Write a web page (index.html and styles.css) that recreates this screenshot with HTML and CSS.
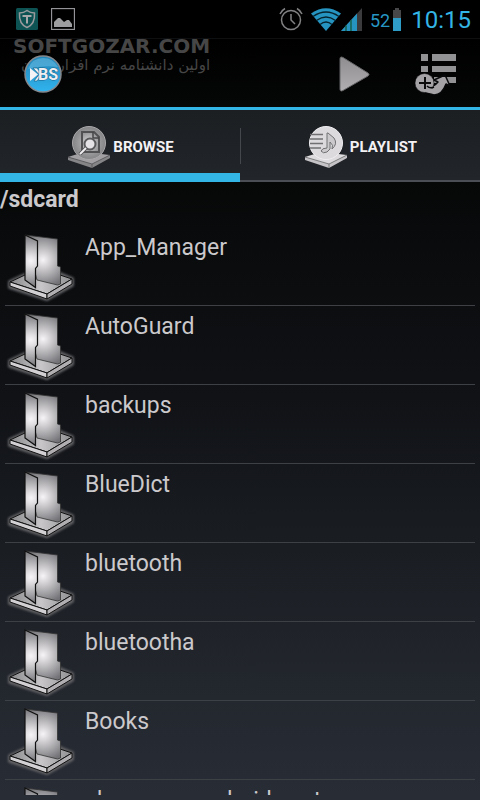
FILE: index.html
```html
<!DOCTYPE html>
<html lang="en">
<head>
    <meta charset="UTF-8">
    <meta name="viewport" content="width=device-width, initial-scale=1">
    <title>BSPlayer</title>
    <link rel="stylesheet" href="styles.css">
</head>
<body>
    <!-- shared shapes -->
    <svg class="defs" width="0" height="0" aria-hidden="true">
        <defs>
            <radialGradient id="front" gradientUnits="userSpaceOnUse" cx="31" cy="36" r="27">
                <stop offset="0" stop-color="#f6f4f6"/>
                <stop offset="0.2" stop-color="#e2e0e3"/>
                <stop offset="1" stop-color="#727276"/>
            </radialGradient>
            <radialGradient id="back" gradientUnits="userSpaceOnUse" cx="43" cy="35" r="27">
                <stop offset="0" stop-color="#f6f4f6"/>
                <stop offset="0.3" stop-color="#d0ced1"/>
                <stop offset="1" stop-color="#737377"/>
            </radialGradient>
            <linearGradient id="plate" x1="0" y1="0" x2="1" y2="0">
                <stop offset="0" stop-color="#88888b"/>
                <stop offset="0.5" stop-color="#c8c6c9"/>
                <stop offset="1" stop-color="#8f8f92"/>
            </linearGradient>
            <radialGradient id="disc">
                <stop offset="0" stop-color="#dddbdd"/>
                <stop offset="0.6" stop-color="#9c9c9e"/>
                <stop offset="1" stop-color="#858587"/>
            </radialGradient>
            <linearGradient id="metal" x1="0" y1="0" x2="0" y2="1">
                <stop offset="0" stop-color="#8f8d90"/>
                <stop offset="1" stop-color="#b0aeb0"/>
            </linearGradient>
            <filter id="glow" x="-20%" y="-40%" width="140%" height="180%">
                <feGaussianBlur stdDeviation="1.3"/>
            </filter>
            <symbol id="folder" viewBox="0 2 80 79">
                <path d="M10 57L25 50L60 49L72 54V60L47 74L10 62Z" fill="#555558" stroke="#606064" stroke-width="4" stroke-linejoin="round" filter="url(#glow)"/>
                <path d="M10 57L25 50L60 50L72 54L47 69Z" fill="url(#plate)" stroke="#111"/>
                <path d="M10 57V61L47 74V69Z" fill="#d2d0d3" stroke="#111"/>
                <path d="M47 69V74L72 59V54Z" fill="#b0aeb1" stroke="#111"/>
                <path d="M25 10L57.500 14V41L60.500 42V59L57.500 60L37 55Z" fill="url(#back)" stroke="#333" stroke-width="0.800"/>
                <path d="M25 10L37.500 16V41L35.500 43.500V62.500L25 55Z" fill="url(#front)" stroke="#111" stroke-width="1.200"/>
            </symbol>
        </defs>
    </svg>

    <div class="status">
        <div class="notifications">
            <svg width="22" height="22" viewBox="0 0 22 22">
                <rect width="22" height="22" rx="1.500" fill="#0d5354"/>
                <path d="M11 2.500C8.500 4.500 6 5 3.500 5C3 12 5 17 11 19.500C17 17 19 12 18.500 5C16 5 13.500 4.500 11 2.500Z" fill="none" stroke="#9a9a9c" stroke-width="1.500"/>
                <path d="M6.500 8H15.500M11 8V15.500" stroke="#a8a8aa" stroke-width="2" fill="none"/>
            </svg>
            <svg width="24" height="22" viewBox="0 0 24 22">
                <rect x="0.500" y="0.500" width="23" height="21" fill="none" stroke="#949397" stroke-width="1.300"/>
                <path d="M3 19V14L5 12L7 10L9 10L13 14L16 12H18L21 16V19Z" fill="#9e9da0"/>
            </svg>
        </div>
        <div class="system">
            <svg class="alarm" width="24" height="24" viewBox="0 0 24 24" fill="none" stroke="#828285" stroke-width="1.500">
                <circle cx="12" cy="13" r="9.500"/>
                <path d="M12 7V13L16 17M1 7Q2.500 3.500 6 1.500M18 1.500Q21.500 3.500 23 7"/>
            </svg>
            <svg class="wifi" width="30" height="23" viewBox="0 0 30 23">
                <path d="M0 5.500Q15 -5 30 5.500L15 23Z" fill="#2694c0"/>
                <path d="M2 8.500Q15 -0.500 28 8.500M5.500 12.500Q15 5.500 24.500 12.500M9 16.500Q15 11.500 21 16.500" fill="none" stroke="#06222d" stroke-width="1.300"/>
            </svg>
            <svg class="signal" width="21" height="23" viewBox="0 0 21 23">
                <path d="M0 23L21 0V23Z" fill="#3b3b3e"/>
                <path d="M0 23L16 5.500V23Z" fill="#2694c0"/>
                <path d="M5 17.500V23M10 12V23" stroke="#14604f" stroke-width="1.500"/>
            </svg>
            <span class="charge">52</span>
            <svg class="battery" width="8" height="23" viewBox="0 0 8 23">
                <path d="M2 0H6V2H8V23H0V2H2Z" fill="#47474a"/>
                <path d="M0 10H8V23H0Z" fill="#2f9cc8"/>
            </svg>
            <span class="clock">10:15</span>
        </div>
    </div>

    <header>
        <div class="watermark">
            <div class="site">SOFTGOZAR.COM</div>
            <div class="slogan" lang="fa" dir="rtl">اولین دانشنامه نرم افزار ایران</div>
        </div>
        <svg class="logo" width="38" height="38" viewBox="0 0 38 38" role="img" aria-label="BS">
            <defs>
                <linearGradient id="ball" x1="0" y1="0" x2="0" y2="1">
                    <stop offset="0" stop-color="#2084b5"/>
                    <stop offset="0.5" stop-color="#2a9bd2"/>
                    <stop offset="1" stop-color="#31b5ef"/>
                </linearGradient>
            </defs>
            <circle cx="19" cy="19" r="18" fill="url(#ball)" stroke="#85898e" stroke-width="1.500"/>
            <path d="M4 14Q8 3 19 3Q29 3 34 12Q18 10 4 14Z" fill="#65b8df" opacity="0.6"/>
            <path d="M6 13L14 19.500L6 26Z" fill="#f4f4f6"/>
            <path d="M9 13H13L18 19.500L13 26H10L15 19.500Z" fill="#e8eef2" stroke="#17658c" stroke-width="0.700"/>
            <text x="14" y="25">BS</text>
        </svg>
        <div class="actions">
            <button type="button" aria-label="Play">
                <svg width="34" height="38" viewBox="0 0 34 38">
                    <path d="M3 4V34Q3 37 6 35.500L31 21Q33 19.500 31 18L6 2.500Q3 1 3 4Z" fill="url(#metal)" stroke="#656568"/>
                </svg>
            </button>
            <button type="button" aria-label="Add to playlist">
                <svg width="44" height="44" viewBox="0 0 44 44">
                    <path d="M7 2H14V9H7ZM18 2H42V9H18ZM7 14H14V20H7ZM18 14H42V20H18ZM20 25H42V31H20Z" fill="#929194"/>
                    <path d="M12 33Q18 37 24 30L20 28L31 23L36 34L32 32Q28 43 20 43Q14 42 11 38Z" fill="#a5a3a6" stroke="#08090a" stroke-width="1.500" stroke-linejoin="round"/>
                    <circle cx="10.500" cy="31" r="9.500" fill="#a5a3a6" stroke="#08090a" stroke-width="0.500"/>
                    <path d="M11 25V37M5 31H17" stroke="#0b0b0c" stroke-width="2"/>
                    <path d="M12 38Q18 41 24 36" fill="none" stroke="#a5a3a6" stroke-width="4"/>
                    <path d="M13 34Q16 37 20 35" fill="none" stroke="#08090a" stroke-width="1.500"/>
                </svg>
            </button>
        </div>
    </header>

    <nav class="tabs">
        <button type="button" class="tab active">
            <svg width="42" height="42" viewBox="0 0 42 42">
                <path d="M0 31L16 26L42 29L24 40Z" fill="#a2a0a3"/>
                <path d="M0 31L24 38L42 29V32L24 42L0 34Z" fill="#858587"/>
                <path d="M0 31L24 38L42 29M24 38V42" fill="none" stroke="#525255" stroke-width="0.800"/>
                <circle cx="21" cy="17" r="16.500" fill="url(#disc)" stroke="#aaa8ab"/>
                <path d="M14 6H26L31 11V26H14Z" fill="none" stroke="#515154" stroke-width="2"/>
                <path d="M25 6V12H31" fill="none" stroke="#454548" stroke-width="1.500"/>
                <circle cx="22" cy="18" r="5.500" fill="#e4e2e5" stroke="#59595c" stroke-width="2"/>
                <path d="M18 22L12 28" stroke="#4d4d50" stroke-width="3.500"/>
                <path d="M18 22L12 28" stroke="#efedf0" stroke-width="2"/>
            </svg>
            <span>BROWSE</span>
        </button>
        <button type="button" class="tab">
            <svg width="42" height="42" viewBox="0 0 42 42">
                <path d="M0 31L16 26L42 29L24 40Z" fill="#dddbdd"/>
                <path d="M0 31L24 38L42 29V32L24 42L0 34Z" fill="#c5c3c6"/>
                <path d="M0 31L24 38L42 29M24 38V42" fill="none" stroke="#69696b" stroke-width="0.800"/>
                <circle cx="21" cy="17" r="16.500" fill="#dcdadd" stroke="#efedf0"/>
                <path d="M5 8.500H18M5 13H18M5 17.500H18M5 22H16" stroke="#707073" stroke-width="1.500"/>
                <path d="M22 7V22Q17 22 16 25Q18 28 22 26L25 23V16Q29 19 27 23Q33 18 29 12L23 7Z" fill="#cbc9cc" stroke="#707073"/>
            </svg>
            <span>PLAYLIST</span>
        </button>
    </nav>

    <main>
        <h1>/sdcard</h1>
        <ul class="files">
            <li><svg class="folder"><use href="#folder"/></svg><span>App_Manager</span></li>
            <li><svg class="folder"><use href="#folder"/></svg><span>AutoGuard</span></li>
            <li><svg class="folder"><use href="#folder"/></svg><span>backups</span></li>
            <li><svg class="folder"><use href="#folder"/></svg><span>BlueDict</span></li>
            <li><svg class="folder"><use href="#folder"/></svg><span>bluetooth</span></li>
            <li><svg class="folder"><use href="#folder"/></svg><span>bluetootha</span></li>
            <li><svg class="folder"><use href="#folder"/></svg><span>Books</span></li>
            <li><svg class="folder"><use href="#folder"/></svg><span>chumruan.android.vent</span></li>
        </ul>
    </main>
</body>
</html>
```

FILE: styles.css
```css
html, body {
    margin: 0;
    padding: 0;
    height: 100%;
}

body {
    display: flex;
    flex-direction: column;
    overflow: hidden;
    color: #cbc9cc;
    font-family: Roboto, sans-serif;
    background-color: #000;
}

.defs {
    position: absolute;
}

button {
    margin: 0;
    padding: 0;
    border: 0;
    background: none;
    color: inherit;
    font-family: inherit;
    display: flex;
    align-items: center;
    justify-content: center;
}

.status {
    display: flex;
    justify-content: space-between;
    height: 38px;
    padding: 0 9px 0 16px;
    border-bottom: 1px solid #0d0f10;
}

.notifications, .system {
    display: flex;
    align-items: center;
}

.notifications {
    gap: 13px;
}

.alarm {
    margin-right: 8px;
}

.signal {
    margin-right: 8px;
}

.charge {
    color: #2796c4;
    font-size: 18px;
    padding-top: 2px;
    margin-right: 3px;
}

.battery {
    margin-right: 10px;
}

.clock {
    color: #33b5e5;
    font-size: 24px;
    padding-top: 2px;
}

header {
    position: relative;
    display: flex;
    align-items: center;
    justify-content: space-between;
    height: 66px;
    padding: 2px 22px 0 24px;
    background: linear-gradient(#000, #050606);
    border-bottom: 3px solid #33b5e5;
}

/* sits behind the app icon */
.watermark {
    position: absolute;
    left: 13px;
    top: 0;
    color: #464646;
}

.site {
    font: bold 20px/14px "DejaVu Sans", sans-serif;
}

.slogan {
    font: 15px/24px "DejaVu Sans", sans-serif;
    white-space: nowrap;
}

.logo {
    position: relative;
}

.logo text {
    font: bold 16px Roboto, sans-serif;
    fill: #eceef2;
    stroke: #17658c;
    stroke-width: 1px;
    paint-order: stroke;
}

.actions {
    display: flex;
    align-items: center;
    gap: 43px;
}

.tabs {
    display: flex;
    height: 72px;
    background: linear-gradient(#1b1f22, #22252a);
}

.tab {
    position: relative;
    flex: 1;
    gap: 3px;
    box-sizing: border-box;
    border-bottom: 2px solid #4b4e54;
    padding: 3px 0 0 2px;
    color: #f3f1f4;
    font-size: 15px;
    font-weight: bold;
}

.tab.active {
    border-bottom: 9px solid #33b5e5;
    padding-top: 10px;
}

.tab.active::after {
    content: "";
    position: absolute;
    right: -1px;
    top: 18px;
    width: 1px;
    height: 36px;
    background-color: #44474b;
}

main {
    flex: 1;
    min-height: 0;
    overflow: hidden;
    background: linear-gradient(#060808, #101216 35%, #20242a 75%, #282c35);
    border-bottom: 5px solid #282c35;
}

h1 {
    margin: 0;
    font-size: 23px;
    font-weight: bold;
    line-height: 36px;
    padding-bottom: 9px;
}

.files {
    list-style: none;
    margin: 0 5px;
    padding: 0;
}

.files li {
    display: flex;
    box-sizing: border-box;
    height: 79px;
    border-bottom: 1px solid #3d4045;
    font-size: 23px;
    line-height: 42px;
}

.folder {
    width: 80px;
    height: 79px;
    margin: 0 0 0 -5px;
    flex: none;
}

.files span {
    padding-left: 5px;
    white-space: nowrap;
}
```
